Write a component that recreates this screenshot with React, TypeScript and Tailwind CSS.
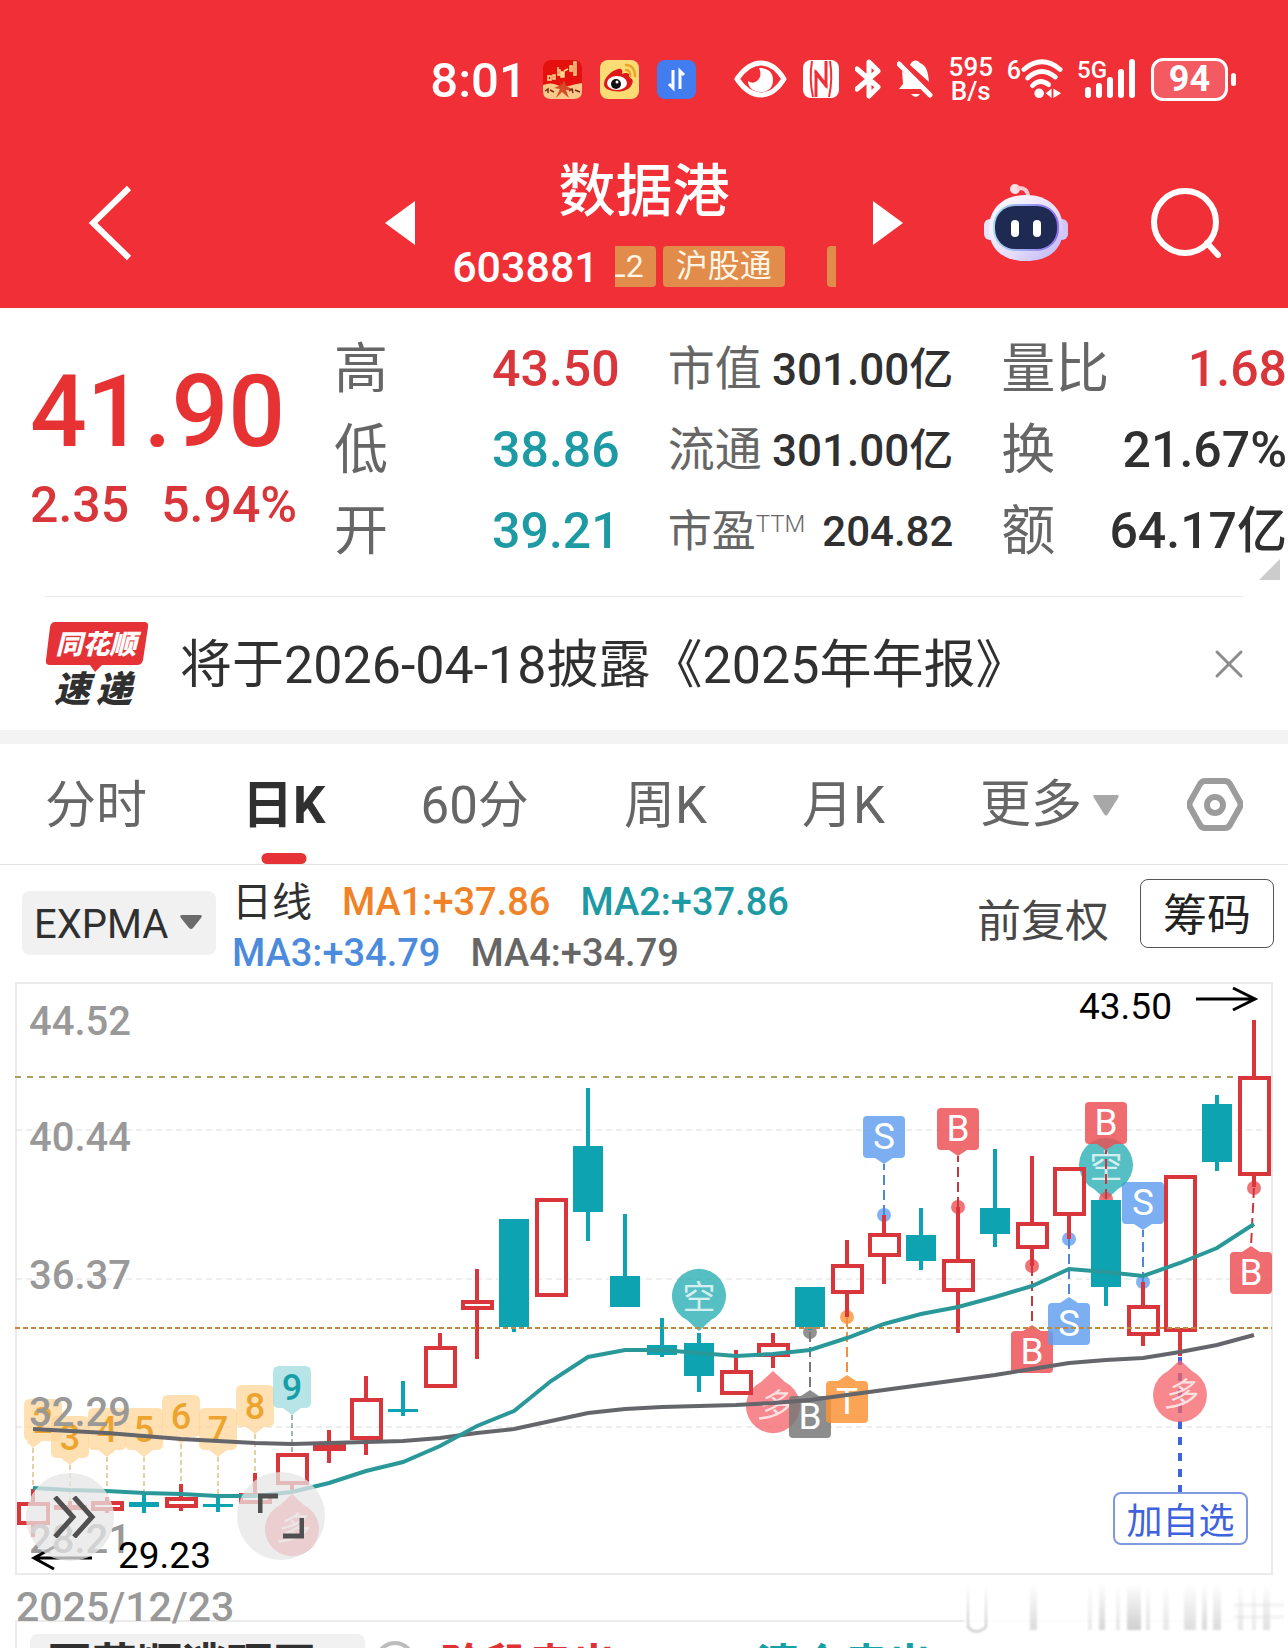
import type { ReactNode } from "react";
import { X } from "lucide-react";

const RED = "#d9363b";
const TEAL = "#0ea3b0";
const STEP = 37;
const cx = (i: number) => 33 + i * STEP;

interface Candle {
  up: boolean;
  top: number;
  bottom: number;
  high: number;
  low: number;
}

const c = (up: boolean, top: number, bottom: number, high: number, low: number): Candle => ({ up, top, bottom, high, low });

const CANDLES: Candle[] = [
  c(true, 1502, 1525, 1489, 1537),
  c(true, 1505, 1509, 1501, 1513),
  c(true, 1501, 1511, 1497, 1513),
  c(false, 1502, 1507, 1495, 1513),
  c(true, 1497, 1508, 1484, 1511),
  c(false, 1504, 1507, 1495, 1512),
  c(true, 1493, 1504, 1473, 1504),
  c(true, 1453, 1485, 1453, 1490),
  c(true, 1444, 1451, 1430, 1463),
  c(true, 1398, 1440, 1376, 1455),
  c(false, 1409, 1412, 1381, 1416),
  c(true, 1346, 1388, 1333, 1388),
  c(true, 1300, 1310, 1269, 1359),
  c(false, 1219, 1327, 1219, 1332),
  c(true, 1198, 1297, 1198, 1297),
  c(false, 1146, 1212, 1088, 1241),
  c(false, 1276, 1307, 1214, 1307),
  c(false, 1345, 1355, 1318, 1357),
  c(false, 1343, 1376, 1333, 1392),
  c(true, 1370, 1395, 1350, 1395),
  c(true, 1343, 1357, 1333, 1368),
  c(false, 1287, 1327, 1287, 1330),
  c(true, 1264, 1294, 1240, 1317),
  c(true, 1233, 1257, 1215, 1284),
  c(false, 1235, 1261, 1208, 1270),
  c(true, 1259, 1292, 1207, 1333),
  c(false, 1208, 1234, 1149, 1247),
  c(true, 1222, 1249, 1156, 1266),
  c(true, 1167, 1216, 1167, 1239),
  c(false, 1200, 1287, 1200, 1306),
  c(true, 1305, 1336, 1282, 1346),
  c(true, 1175, 1332, 1175, 1356),
  c(false, 1104, 1162, 1095, 1171),
  c(true, 1076, 1176, 1020, 1187),
];

const FAST = [
  1488, 1490, 1491, 1493, 1494, 1496, 1496, 1492, 1483, 1471, 1462, 1446, 1426, 1411, 1381, 1357, 1350,
  1350, 1353, 1356, 1354, 1350, 1338, 1324, 1314, 1307, 1297, 1286, 1269, 1272, 1276, 1263, 1248, 1224,
];

const SLOW = [
  1429, 1431, 1433, 1436, 1439, 1441, 1443, 1444, 1443, 1442, 1441, 1438, 1433, 1429, 1421, 1413, 1409,
  1407, 1406, 1405, 1403, 1400, 1395, 1390, 1385, 1380, 1375, 1369, 1363, 1360, 1358, 1352, 1345, 1335,
];

const SEQUENCE = [
  { i: 0, n: 2, y: 1399, end: 1489 },
  { i: 1, n: 3, y: 1416, end: 1501 },
  { i: 2, n: 4, y: 1408, end: 1497 },
  { i: 3, n: 5, y: 1408, end: 1495 },
  { i: 4, n: 6, y: 1395, end: 1484 },
  { i: 5, n: 7, y: 1408, end: 1495 },
  { i: 6, n: 8, y: 1385, end: 1473 },
  { i: 7, n: 9, y: 1366, end: 1453 },
];

const SIGNALS = [
  { i: 21, label: "B", y: 1396, dot: 1332, fill: "#777777", line: "#777777" },
  { i: 22, label: "T", y: 1381, dot: 1317, fill: "#fb9336", line: "#f09040" },
  { i: 23, label: "S", y: 1116, dot: 1215, fill: "#639ff0", line: "#4d88d8" },
  { i: 25, label: "B", y: 1108, dot: 1207, fill: "#ec5056", line: "#c9363c" },
  { i: 27, label: "B", y: 1331, dot: 1266, fill: "#ec5056", line: "#c9363c" },
  { i: 28, label: "S", y: 1303, dot: 1239, fill: "#639ff0", line: "#4d88d8" },
  { i: 29, label: "B", y: 1102, dot: 1199, fill: "#ec5056", line: "#c9363c" },
  { i: 30, label: "S", y: 1182, dot: 1282, fill: "#639ff0", line: "#4d88d8" },
  { i: 33, label: "B", y: 1252, dot: 1188, fill: "#ec5056", line: "#c9363c" },
];

const AXIS = [
  { label: "44.52", y: 1035 },
  { label: "40.44", y: 1151 },
  { label: "36.37", y: 1289 },
  { label: "32.29", y: 1426 },
  { label: "28.21", y: 1553 },
];

const toPoints = (ys: number[]) => ys.map((y, i) => `${cx(i)},${y}`).join(" ");

function CandleBar({ candle, x }: { candle: Candle; x: number }) {
  const { up, top, bottom, high, low } = candle;
  if (!up) {
    return (
      <g fill={TEAL}>
        <rect x={x - 2} y={high} width="4" height={low - high} />
        <rect x={x - 15} y={top} width="30" height={bottom - top} />
      </g>
    );
  }
  return (
    <g stroke={RED} strokeWidth="4" fill="none">
      {high < top && <path d={`M${x} ${high}V${top}`} />}
      {low > bottom && <path d={`M${x} ${bottom}V${low}`} />}
      <rect x={x - 14} y={top + 2} width="29" height={Math.max(bottom - top - 4, 1)} />
    </g>
  );
}

function Bubble({ x, y, text, down, fill }: { x: number; y: number; text: string; down?: boolean; fill: string }) {
  const d = down ? 1 : -1;
  return (
    <g>
      <path
        d={`M${x} ${y + d * 34}L${x + 12} ${y + d * 23}A27 27 0 1 ${down ? 0 : 1} ${x - 12} ${y + d * 23}Z`}
        fill={fill}
        opacity="0.76"
      />
      <text x={x} y={y + 12} fontSize="33" textAnchor="middle" fill="#ffffff" fillOpacity="0.75" fontStyle={down ? "normal" : "italic"}>
        {text}
      </text>
    </g>
  );
}

function Signal({ x, y, label, dot, fill, line }: { x: number; y: number; label: string; dot: number; fill: string; line: string }) {
  const below = dot < y;
  const tip = below ? y - 6 : y + 48;
  const edge = below ? y : y + 42;
  // keep the badge inside the chart frame
  const bx = Math.min(x, 1251);
  return (
    <g>
      <circle cx={x} cy={dot} r="7" fill={fill} fillOpacity="0.8" />
      <path d={`M${x} ${dot}L${bx} ${tip}`} stroke={line} strokeWidth="2" strokeDasharray="10 5" />
      <rect x={bx - 21} y={y} width="42" height="42" rx="4" fill={fill} fillOpacity="0.84" />
      <path d={`M${bx - 9} ${edge}L${bx} ${tip}L${bx + 9} ${edge}Z`} fill={fill} fillOpacity="0.84" />
      <text x={bx} y={y + 33} fontSize="37" textAnchor="middle" fill="#ffffff">
        {label}
      </text>
    </g>
  );
}

function KLineChart() {
  return (
    <svg viewBox="0 980 1288 596" className="block h-auto w-full" role="img" aria-label="日K">
      <rect x="16" y="983" width="1256" height="591" fill="none" stroke="#ebebeb" strokeWidth="2" />
      <g strokeWidth="1" stroke="#dddddd" strokeDasharray="6 4">
        <path d="M16 1130H1272" />
        <path d="M16 1279H1272" />
        <path d="M16 1427H1272" />
      </g>
      <path d="M15 1077H1272" stroke="#a79e62" strokeWidth="2" strokeDasharray="6 6" />

      {SEQUENCE.map(({ i, n, y, end }) => {
        const tip = cx(i);
        // first label is pushed in from the chart edge
        const x = Math.max(tip, 43);
        const last = n === 9;
        return (
          <g key={n}>
            <path d={`M${tip} ${y + 49}V${end}`} stroke={last ? "#3d6f72" : "#c9a54a"} strokeWidth="1" strokeDasharray="5 3" />
            <path
              d={`M${x - 13} ${y}h26q6 0 6 6v30q0 6 -6 6H${tip + 9}L${tip} ${y + 49}L${Math.max(tip - 9, x - 17)} ${y + 42}H${x - 13}q-6 0 -6 -6v-30q0 -6 6 -6Z`}
              fill={last ? "#9fdbde" : "#ffd699"}
              fillOpacity="0.75"
            />
            <text x={x} y={y + 34} fontSize="36" fontWeight="500" textAnchor="middle" fill={last ? "#169fa8" : "#eda42f"}>
              {n}
            </text>
          </g>
        );
      })}

      <Bubble x={cx(20)} y={1405} text="多" fill="#f4646a" />
      {SIGNALS.filter((s) => s.i !== 29).map((s) => (
        <Signal key={s.i} x={cx(s.i)} y={s.y} label={s.label} dot={s.dot} fill={s.fill} line={s.line} />
      ))}
      <Bubble x={cx(18)} y={1297} text="空" down fill="#1fabb0" />
      <Bubble x={cx(29)} y={1166} text="空" down fill="#1fabb0" />
      {SIGNALS.filter((s) => s.i === 29).map((s) => (
        <Signal key={s.i} x={cx(s.i)} y={s.y} label={s.label} dot={s.dot} fill={s.fill} line={s.line} />
      ))}

      {CANDLES.map((candle, i) => (
        <CandleBar key={i} candle={candle} x={cx(i)} />
      ))}

      <path d="M15 1328H1272" stroke="#c08a3a" strokeWidth="2" strokeDasharray="5 3" />
      <path d={`M${cx(31)} 1357V1493`} stroke="#3f62dd" strokeWidth="4" strokeDasharray="8 8" />
      <Bubble x={cx(31)} y={1394} text="多" fill="#f4646a" />
      <Bubble x={cx(7)} y={1528} text="多" fill="#f4646a" />

      <g fontSize="40" fontWeight="500" fill="#999999">
        {AXIS.map(({ label, y }) => (
          <text key={label} x="29" y={y}>
            {label}
          </text>
        ))}
      </g>
      <polyline points={toPoints(SLOW)} fill="none" stroke="#65666b" strokeWidth="4" />
      <polyline points={toPoints(FAST)} fill="none" stroke="#2a9899" strokeWidth="4" />

      <g fontSize="37" fill="#000000">
        <text x="1079" y="1019">43.50</text>
        <text x="118" y="1568">29.23</text>
      </g>
      <g stroke="#000000" strokeWidth="3" fill="none">
        <path d="M1196 999H1254M1233 988L1255 999L1233 1010" />
        <path d="M92 1558H35M54 1547L34 1558L54 1569" />
      </g>
    </svg>
  );
}

function StatusBar() {
  return (
    <div className="flex h-[158px] items-center justify-end pr-[52px]">
      <span className="mr-4 pt-[3px] text-[49px] font-medium leading-[48px]">8:01</span>
      <div className="mr-[38px] flex gap-[18px]">
        <svg viewBox="0 0 39 39" className="size-[39px]">
          <rect width="39" height="39" rx="8" fill="#e5110f" />
          <path d="M0 25Q8 22 14 25T26 26T39 23V31Q39 39 31 39H8Q0 39 0 31Z" fill="#f7c98a" />
          <g stroke="#ffd98e" strokeWidth="1.5" fill="none">
            <path d="M5 16h3v4h-3zM10 15h2v4h-2zM15 10h2v5h-2zM15 7v3M21 11l4-2M27 6h2v5h-2zM31 2h2v13h-2z" />
            <path d="M18 12h3v5h-3z" fill="#ffd98e" />
          </g>
          <path d="M15 19l3 6l-7 3l6 1l-4 9l6-6l7 6l-3-8l8 0l-8-4l-2-6l-2 5z" fill="#d64a28" />
          <path d="M2 31l3-2v4M7 30l4 2M26 31l3-2l1 4M32 30l5 2" stroke="#7a2a14" strokeWidth="1.5" fill="none" />
        </svg>
        <svg viewBox="0 0 39 39" className="size-[39px]">
          <rect width="39" height="39" rx="8" fill="#fbdc74" />
          <path d="M4 24C4 17 13 10 18 9c4-1 5 2 4 5c4-2 9-1 8 4c4 1 3 5 1 8c-4 6-13 6-18 5c-5-1-9-3-9-7Z" fill="#dd1818" />
          <ellipse cx="17" cy="23" rx="10" ry="7" fill="#ffffff" />
          <circle cx="16" cy="24" r="5" fill="#111111" />
          <circle cx="17" cy="22" r="1.5" fill="#ffffff" />
          <path d="M26 5c6 0 9 5 9 11M26 10c3 0 5 3 4 6" stroke="#eda128" strokeWidth="2.5" fill="none" strokeLinecap="round" />
        </svg>
        <svg viewBox="0 0 39 39" className="size-[39px]">
          <rect width="39" height="39" rx="8" fill="#427df0" />
          <path d="M16 10V28L12 24M23 29V11L27 15" stroke="#ffffff" strokeWidth="3" fill="none" />
        </svg>
      </div>
      <svg viewBox="0 0 53 38" className="mr-4 h-[38px] w-[53px]">
        <path d="M3 19Q14 3 27 3T50 19Q40 35 27 35T3 19Z" fill="none" stroke="#ffffff" strokeWidth="5" strokeLinejoin="round" />
        <path d="M25 8c9 0 14 4 14 12s-5 12-12 12S14 28 14 21q4 3 7 1c5-2 7-8 4-14Z" fill="#ffffff" />
      </svg>
      <svg viewBox="0 0 36 38" className="mr-4 h-[38px] w-9">
        <rect width="36" height="38" rx="8" fill="#ffffff" />
        <path d="M9 1Q6 19 10 37M27 1Q30 19 26 37" stroke="#f12f37" strokeWidth="2" fill="none" />
        <path d="M13 37V13L24 27M23 1V25L12 11" stroke="#f12f37" strokeWidth="3" fill="none" />
      </svg>
      <svg viewBox="0 0 26 42" className="mr-4 h-[42px] w-[26px]">
        <path d="M2 11L23 29L14 38V4L23 13L2 31" stroke="#ffffff" strokeWidth="5" fill="none" strokeLinejoin="round" strokeLinecap="round" />
      </svg>
      <svg viewBox="0 0 36 42" className="mr-4 h-[42px] w-9">
        <path d="M5 13L28 31H2L6 26Z" fill="#ffffff" />
        <path d="M13 7C15 2 20 1 23 5C30 8 31 14 32 24Z" fill="#ffffff" />
        <path d="M14 36h9q-4 6-9 0Z" fill="#ffffff" />
        <path d="M2 6L33 37" stroke="#ffffff" strokeWidth="5" strokeLinecap="round" />
      </svg>
      <div className="mr-[14px] flex w-[44px] flex-col items-center text-[26px] font-medium leading-[24px]">
        <span>595</span>
        <span>B/s</span>
      </div>
      <span className="self-center pb-4 text-[25px] font-medium leading-[24px]">6</span>
      <svg viewBox="0 0 44 42" className="mr-[14px] h-[42px] w-[42px]">
        <g stroke="#ffffff" strokeWidth="5" fill="none" strokeLinecap="round">
          <path d="M3 11Q22-5 41 11" />
          <path d="M7 20Q21 7 36 19" />
          <path d="M12 28Q20 20 29 27" />
        </g>
        <circle cx="19" cy="36" r="5" fill="#ffffff" />
        <path d="M26 36l6-5v10zM34 31l8 5l-8 5z" fill="#ffffff" />
      </svg>
      <div className="relative mr-4 h-[42px] w-[58px]">
        <span className="absolute left-0 top-0 text-[24px] font-medium leading-[24px]">5G</span>
        <svg viewBox="0 0 58 42" className="size-full">
          <path d="M11 32V37M22 28V37M33 22V37M44 14V37M55 4V37" stroke="#ffffff" strokeWidth="6" strokeLinecap="round" />
        </svg>
      </div>
      <div className="flex items-center gap-[3px]">
        <span className="flex h-[43px] w-[77px] items-center justify-center rounded-[12px] border-[3px] border-white bg-[#f45a62] text-[36px] font-bold leading-[36px]">
          94
        </span>
        <span className="h-[13px] w-[5px] rounded-full bg-white" />
      </div>
    </div>
  );
}

function Header() {
  return (
    <header className="bg-[#f12f37] pb-[21px] text-white">
      <StatusBar />
      <div className="grid grid-cols-[1fr_518px_1fr] items-center">
        <div className="flex pl-[88px]">
          <button type="button" aria-label="返回">
            <svg viewBox="0 0 44 76" className="h-[76px] w-[44px]">
              <path d="M41 3L5 38L41 73" stroke="#ffffff" strokeWidth="6" fill="none" />
            </svg>
          </button>
        </div>
        <div className="flex items-center justify-between">
          <button type="button" aria-label="上一只">
            <svg viewBox="0 0 30 44" className="h-11 w-[30px]">
              <path d="M30 0V44L0 22Z" fill="#ffffff" />
            </svg>
          </button>
          <div>
            <h1 className="text-center text-[57px] font-medium leading-[68px]">数据港</h1>
            <div className="mt-[19px] flex h-[42px] items-center gap-4">
              <span className="pt-[2px] text-[43px] font-medium leading-[42px]">603881</span>
              <div className="flex w-[221px] gap-[7px] overflow-hidden text-[32px] leading-[41px] text-[#fff6e6]">
                <span className="flex w-[41px] shrink-0 justify-end rounded-r bg-[#e18c4a] pr-3">L2</span>
                <span className="w-[122px] shrink-0 rounded bg-[#e18c4a] text-center">沪股通</span>
                <span className="ml-[35px] w-[40px] shrink-0 rounded bg-[#e18c4a]" />
              </div>
            </div>
          </div>
          <button type="button" aria-label="下一只">
            <svg viewBox="0 0 30 44" className="h-11 w-[30px]">
              <path d="M0 0V44L30 22Z" fill="#ffffff" />
            </svg>
          </button>
        </div>
        <div className="flex items-center justify-end gap-[82px] pr-[66px]">
          <button type="button" aria-label="智能助手">
            <svg viewBox="0 0 84 78" className="h-[78px] w-[84px]">
              <defs>
                <linearGradient id="shell" x1="0" y1="0" x2="1" y2="1">
                  <stop offset="0" stopColor="#ffffff" />
                  <stop offset="0.6" stopColor="#e6dcfa" />
                  <stop offset="1" stopColor="#b9b2f2" />
                </linearGradient>
                <linearGradient id="rim" x1="0" y1="0" x2="1" y2="0">
                  <stop offset="0" stopColor="#a9dcf0" />
                  <stop offset="1" stopColor="#8d6cf0" />
                </linearGradient>
              </defs>
              <circle cx="31" cy="5" r="5" fill="#ffdfe6" />
              <path d="M33 4Q44 3 44 13" stroke="#ffc9d3" strokeWidth="4" fill="none" />
              <rect x="0" y="35" width="12" height="21" rx="6" fill="#e9e3fb" />
              <rect x="72" y="35" width="12" height="21" rx="6" fill="#cfc8f5" />
              <path d="M42 11C64 11 79 24 79 45S64 77 42 77S5 66 5 45S20 11 42 11Z" fill="url(#shell)" />
              <rect x="9" y="20" width="66" height="47" rx="22" fill="url(#rim)" />
              <rect x="11" y="22" width="62" height="43" rx="20" fill="#1e2a52" />
              <rect x="27" y="36" width="8" height="17" rx="4" fill="#ffffff" />
              <rect x="49" y="36" width="8" height="17" rx="4" fill="#ffffff" />
            </svg>
          </button>
          <button type="button" aria-label="搜索">
            <svg viewBox="0 0 72 72" className="size-[72px]">
              <circle cx="35" cy="35" r="31" stroke="#ffffff" strokeWidth="6" fill="none" />
              <path d="M57 56L68 68" stroke="#ffffff" strokeWidth="6" strokeLinecap="round" />
            </svg>
          </button>
        </div>
      </div>
    </header>
  );
}

function Stat({ label, value, labelClass, valueClass }: { label: ReactNode; value: string; labelClass: string; valueClass: string }) {
  return (
    <div className="flex h-[81px] items-center justify-between whitespace-nowrap">
      <dt className={`text-[#666666] ${labelClass}`}>{label}</dt>
      <dd className={`font-medium ${valueClass}`}>{value}</dd>
    </div>
  );
}

function Quote() {
  const big = "text-[54px]";
  const mid = "text-[47px]";
  return (
    <section className="relative grid grid-cols-[256px_1fr_1fr_1fr] gap-12 pb-6 pl-[30px] pr-[1px] pt-[21px]">
      <div className="flex flex-col pt-[33px] font-medium text-[#e63232]">
        <span className="text-[100px] leading-[100px]">41.90</span>
        <div className="mt-[13px] flex gap-8 whitespace-nowrap text-[50px] leading-[60px] text-[#d9363b]">
          <span>2.35</span>
          <span>5.94%</span>
        </div>
      </div>
      <dl>
        <Stat label="高" value="43.50" labelClass={big} valueClass="text-[50px] text-[#d9363b]" />
        <Stat label="低" value="38.86" labelClass={big} valueClass="text-[50px] text-[#1d9aa3]" />
        <Stat label="开" value="39.21" labelClass={big} valueClass="text-[50px] text-[#1d9aa3]" />
      </dl>
      <dl>
        <Stat label="市值" value="301.00亿" labelClass={mid} valueClass="text-[44px] text-[#303030]" />
        <Stat label="流通" value="301.00亿" labelClass={mid} valueClass="text-[44px] text-[#303030]" />
        <Stat
          label={
            <span className="flex items-start">
              市盈<span className="text-[24px] font-light leading-[50px]">TTM</span>
            </span>
          }
          value="204.82"
          labelClass="text-[44px]"
          valueClass="text-[42px] text-[#303030]"
        />
      </dl>
      <dl>
        <Stat label="量比" value="1.68" labelClass={big} valueClass="text-[50px] text-[#d9363b]" />
        <Stat label="换" value="21.67%" labelClass={big} valueClass="text-[50px] text-[#303030]" />
        <Stat label="额" value="64.17亿" labelClass={big} valueClass="text-[50px] text-[#303030]" />
      </dl>
      <svg viewBox="0 0 21 21" className="absolute bottom-4 right-2 size-[21px]">
        <path d="M21 0V21H0Z" fill="#cccccc" />
      </svg>
    </section>
  );
}

function News() {
  return (
    <section className="mx-[45px] flex h-[134px] items-center border-t border-[#e8e8e8]">
      <svg viewBox="0 0 104 84" className="h-[84px] w-[104px]">
        <path d="M10 0H99Q104 0 103 5L98 38Q97 43 92 43H57L50 50L45 43H5Q0 43 1 38L5 5Q6 0 10 0Z" fill="#e53236" />
        <text x="51" y="32" fontSize="27" fontWeight="900" fontStyle="italic" textAnchor="middle" fill="#ffffff">
          同花顺
        </text>
        <g fontSize="36" fontWeight="900" fontStyle="italic" fill="#303030">
          <text x="9" y="80">速</text>
          <text x="51" y="80">递</text>
        </g>
      </svg>
      <a href="#report" className="ml-[31px] flex-1 whitespace-nowrap pt-1 text-[52px] leading-[64px] text-[#303030]">
        将于2026-04-18披露《2025年年报》
      </a>
      <button type="button" aria-label="关闭" className="-mr-[10px]">
        <X className="size-12 text-[#8c8c8c]" strokeWidth={1.5} />
      </button>
    </section>
  );
}

function Tabs() {
  const tabs = ["分时", "日K", "60分", "周K", "月K"];
  return (
    <nav className="flex h-[121px] items-center border-b border-[#e3e3e3] pl-[45px] pr-[45px] text-[51px] text-[#666666]">
      <div className="mr-[68px] flex h-full flex-1 justify-between">
        {tabs.map((tab) =>
          tab === "日K" ? (
            <button key={tab} type="button" className="relative pt-1 font-bold text-[#303030]">
              {tab}
              <span className="absolute bottom-0 left-1/2 h-[11px] w-[45px] -translate-x-1/2 rounded-full bg-[#e63236]" />
            </button>
          ) : (
            <button key={tab} type="button" className="pt-1">
              {tab}
            </button>
          ),
        )}
        <button type="button" className="flex items-center gap-[11px] pt-[2px]">
          更多
          <svg viewBox="0 0 26 21" className="h-[21px] w-[26px]">
            <path d="M2 0H24Q27 0 25 3L15 19Q13 22 11 19L1 3Q-1 0 2 0Z" fill="#a8a8a8" />
          </svg>
        </button>
      </div>
      <button type="button" aria-label="设置">
        <svg viewBox="0 0 56 53" className="h-[53px] w-[56px]">
          <path d="M18 3H38Q41 3 43 6L53 24Q54 27 53 29L43 47Q41 50 38 50H18Q15 50 13 47L3 29Q2 27 3 24L13 6Q15 3 18 3Z" fill="none" stroke="#9c9c9c" strokeWidth="6" />
          <circle cx="28" cy="27" r="8" fill="none" stroke="#9c9c9c" strokeWidth="6" />
        </svg>
      </button>
    </nav>
  );
}

function Toolbar() {
  return (
    <div className="flex h-[115px] items-start pl-[22px] pr-[14px]">
      <label className="relative mt-[26px]">
        <select aria-label="指标" className="h-16 w-[194px] appearance-none rounded-lg bg-[#f1f1f1] pl-3 pt-1 text-[40px] leading-[60px] text-[#303030]">
          <option>EXPMA</option>
        </select>
        <svg viewBox="0 0 22 15" className="pointer-events-none absolute right-[14px] top-6 h-[15px] w-[22px]">
          <path d="M2 0H20Q23 0 21 3L13 13Q11 15 9 13L1 3Q-1 0 2 0Z" fill="#6b6b6b" />
        </svg>
      </label>
      <div className="ml-4 mt-3 flex-1 whitespace-nowrap text-[38px] font-medium leading-[51px]">
        <div className="flex gap-[30px]">
          <span className="text-[40px] font-normal text-[#303030]">日线</span>
          <span className="text-[#f08228]">MA1:+37.86</span>
          <span className="text-[#1d9aa3]">MA2:+37.86</span>
        </div>
        <div className="flex gap-[30px]">
          <span className="text-[#4b8bdc]">MA3:+34.79</span>
          <span className="text-[#666666]">MA4:+34.79</span>
        </div>
      </div>
      <button type="button" className="mr-[31px] mt-[25px] text-[44px] leading-[64px] text-[#484848]">
        前复权
      </button>
      <button type="button" className="mt-[14px] h-[69px] w-[134px] rounded-lg border border-[#555555] pt-1 text-[44px] leading-[64px] text-[#222222]">
        筹码
      </button>
    </div>
  );
}

function Chart() {
  return (
    <section className="relative">
      <KLineChart />
      <button type="button" aria-label="展开" className="absolute left-[26px] top-[493px] flex size-[88px] items-center justify-center rounded-full bg-[#e6e6e6]/75 pl-2">
        <svg viewBox="0 0 44 42" className="h-[42px] w-[44px]">
          <path d="M3 1L21 21L3 41M22 1L40 21L22 41" stroke="#505050" strokeWidth="5" fill="none" />
        </svg>
      </button>
      <button type="button" aria-label="全屏" className="absolute left-[237px] top-[492px] flex size-[88px] items-center justify-center rounded-full bg-[#e6e6e6]/75">
        <svg viewBox="0 0 46 46" className="size-[46px]">
          <path d="M2 20V3H20M44 25V43H25" stroke="#505050" strokeWidth="5" fill="none" />
        </svg>
      </button>
      <button type="button" className="absolute right-10 top-[512px] h-[53px] w-[135px] rounded-lg border-2 border-[#7f9be0] bg-white pt-1 text-[36px] leading-[48px] text-[#3f62dd]">
        加自选
      </button>
    </section>
  );
}

const STREAKS = [
  { x: 62, w: 7, o: 0.3 },
  { x: 120, w: 4, o: 0.18 },
  { x: 131, w: 6, o: 0.35 },
  { x: 148, w: 4, o: 0.2 },
  { x: 159, w: 14, o: 0.4 },
  { x: 178, w: 4, o: 0.24 },
  { x: 195, w: 6, o: 0.2 },
  { x: 216, w: 12, o: 0.28 },
  { x: 234, w: 5, o: 0.32 },
  { x: 245, w: 8, o: 0.3 },
  { x: 270, w: 5, o: 0.2 },
  { x: 284, w: 4, o: 0.18 },
  { x: 295, w: 7, o: 0.26 },
];

function SubPanel() {
  return (
    <section className="relative">
      <div className="h-11 pl-4 pt-[9px] text-[41px] font-medium leading-[44px] text-[#999999]">2025/12/23</div>
      <div className="mx-[15px] flex items-start border-l-2 border-t-2 border-[#ebebeb] pl-[13px] pt-3">
        <button type="button" className="mr-[10px] h-16 w-[335px] rounded-lg bg-[#f1f1f1] pl-[17px] text-left text-[45px] font-bold leading-[64px] text-[#303030]">
          同花顺逃顶王
        </button>
        <span className="mt-[7px] size-[40px] rounded-full border-4 border-[#bdbdbd]" />
        <span className="ml-[25px] text-[44px] font-bold leading-[64px] text-[#e03236]">阶段卖出</span>
        <span className="ml-[140px] text-[44px] font-bold leading-[64px] text-[#14a0a6]">清仓卖出</span>
      </div>
      <svg viewBox="0 0 324 52" className="absolute right-0 top-[6px] h-[52px] w-[324px] blur-[1px]">
        <defs>
          <linearGradient id="fade" x1="0" y1="0" x2="0" y2="1">
            <stop offset="0" stopColor="#888888" stopOpacity="0" />
            <stop offset="1" stopColor="#888888" />
          </linearGradient>
        </defs>
        <rect x="0" y="4" width="324" height="48" fill="#ffffff" fillOpacity="0.9" />
        <path d="M4 2V45Q12 54 22 45V2" fill="none" stroke="url(#fade)" strokeWidth="2" strokeOpacity="0.5" />
        {STREAKS.map((s) => (
          <rect key={s.x} x={s.x + 4} y="2" width={s.w} height="46" fill="url(#fade)" fillOpacity={s.o} />
        ))}
        <path d="M270 23H320M270 35H320" stroke="#dddddd" strokeWidth="3" strokeOpacity="0.4" />
      </svg>
    </section>
  );
}

export default function App() {
  return (
    <main className="h-screen overflow-hidden bg-white font-['Roboto','Noto_Sans_CJK_SC',sans-serif]">
      <Header />
      <Quote />
      <News />
      <div className="h-[14px] bg-[#f3f3f3]" />
      <Tabs />
      <Toolbar />
      <Chart />
      <SubPanel />
    </main>
  );
}
